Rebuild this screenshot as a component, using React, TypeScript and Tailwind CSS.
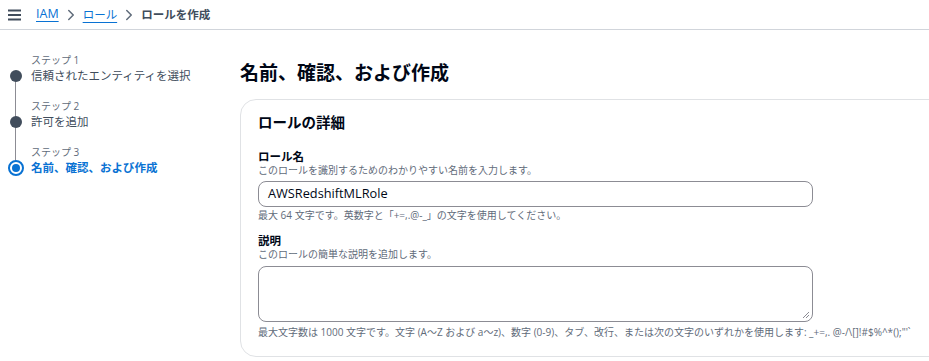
import React from "react";

const font = { fontFamily: '"Open Sans", "Noto Sans CJK JP", sans-serif' };

function Chevron() {
  return (
    <svg width="12" height="12" viewBox="0 0 16 16" fill="none" stroke="#5f6b7a" strokeWidth="2" strokeLinecap="round" strokeLinejoin="round">
      <path d="M5 2l6 6-6 6" />
    </svg>
  );
}

function Step({ n, title, active, last }: { n: number; title: string; active?: boolean; last?: boolean }) {
  return (
    <div className="relative flex h-[46px]">
      <div className="relative w-[31px] shrink-0">
        {!last && <div className="absolute left-[15px] top-[22px] h-[46px] w-px bg-[#8c8c94]" />}
        {active ? (
          <div className="absolute left-[8px] top-[14px] flex h-[16px] w-[16px] items-center justify-center rounded-full border-[2px] border-[#0972d3] bg-white">
            <div className="h-[8px] w-[8px] rounded-full bg-[#0972d3]" />
          </div>
        ) : (
          <div className="absolute left-[10px] top-[16px] h-[12px] w-[12px] rounded-full bg-[#414d5c]" />
        )}
      </div>
      <div>
        <div className="text-[10px] leading-[12px] text-[#5f6b7a]">ステップ {n}</div>
        <div className={`mt-[3px] text-[11.5px] leading-[14px] ${active ? "font-bold text-[#0972d3]" : "text-[#414d5c]"}`}>{title}</div>
      </div>
    </div>
  );
}

export default function App() {
  return (
    <div className="h-[361px] w-[929px] overflow-hidden bg-white text-[#000716]" style={font}>
      <header className="flex h-[30px] items-center border-b border-[#d1d5db] pl-[8px]">
        <svg width="13" height="12" viewBox="0 0 13 12" className="mr-[15px]">
          <rect x="0" y="0.5" width="13" height="2" fill="#414d5c" />
          <rect x="0" y="5" width="13" height="2" fill="#414d5c" />
          <rect x="0" y="9.5" width="13" height="2" fill="#414d5c" />
        </svg>
        <a className="text-[12.5px] text-[#0972d3] underline decoration-[#0972d3] underline-offset-[3px]">IAM</a>
        <span className="mx-[6px] flex items-center"><Chevron /></span>
        <a className="text-[11.5px] text-[#0972d3] underline decoration-[#0972d3] underline-offset-[3px]">ロール</a>
        <span className="mx-[6px] flex items-center"><Chevron /></span>
        <span className="text-[11.5px] font-bold text-[#414d5c]">ロールを作成</span>
      </header>
      <div className="flex">
        <aside className="w-[240px] shrink-0 pt-[24px]">
          <Step n={1} title="信頼されたエンティティを選択" />
          <Step n={2} title="許可を追加" />
          <Step n={3} title="名前、確認、および作成" active last />
        </aside>
        <main className="min-w-0 flex-1">
          <h1 className="mt-[31px] text-[19px] font-bold leading-[24px]">名前、確認、および作成</h1>
          <section className="mt-[14px] h-[258px] w-[720px] rounded-[16px] border border-[#e0e2e5] pl-[17px] pt-[13px]">
            <h2 className="text-[14.5px] font-bold leading-[20px]">ロールの詳細</h2>
            <div className="mt-[17px]">
              <div className="text-[11.5px] font-bold leading-[14px]">ロール名</div>
              <div className="text-[10px] leading-[12px] text-[#5f6b7a]">このロールを識別するためのわかりやすい名前を入力します。</div>
              <div className="mt-[5px] flex h-[26px] w-[555px] items-center rounded-[8px] border border-[#8c8c94] pl-[9px] text-[12.75px]">AWSRedshiftMLRole</div>
              <div className="mt-[2px] text-[10px] leading-[12px] text-[#5f6b7a]">最大 64 文字です。英数字と「+=,.@-_」の文字を使用してください。</div>
            </div>
            <div className="mt-[13px]">
              <div className="text-[11.5px] font-bold leading-[14px]">説明</div>
              <div className="text-[10px] leading-[12px] text-[#5f6b7a]">このロールの簡単な説明を追加します。</div>
              <div className="relative mt-[6px] h-[56px] w-[555px] rounded-[8px] border border-[#8c8c94]">
                <svg width="8" height="8" viewBox="0 0 8 8" className="absolute bottom-[2px] right-[2px]">
                  <path d="M7 1L1 7M7 4L4 7" stroke="#8c8c94" strokeWidth="1" />
                </svg>
              </div>
              <div className="mt-[4px] whitespace-nowrap text-[10px] leading-[12px] text-[#5f6b7a]">最大文字数は 1000 文字です。文字 (A～Z および a～z)、数字 (0-9)、タブ、改行、または次の文字のいずれかを使用します: _+=,. @-/\[{}]!#$%^*();"'`</div>
            </div>
          </section>
        </main>
      </div>
    </div>
  );
}
